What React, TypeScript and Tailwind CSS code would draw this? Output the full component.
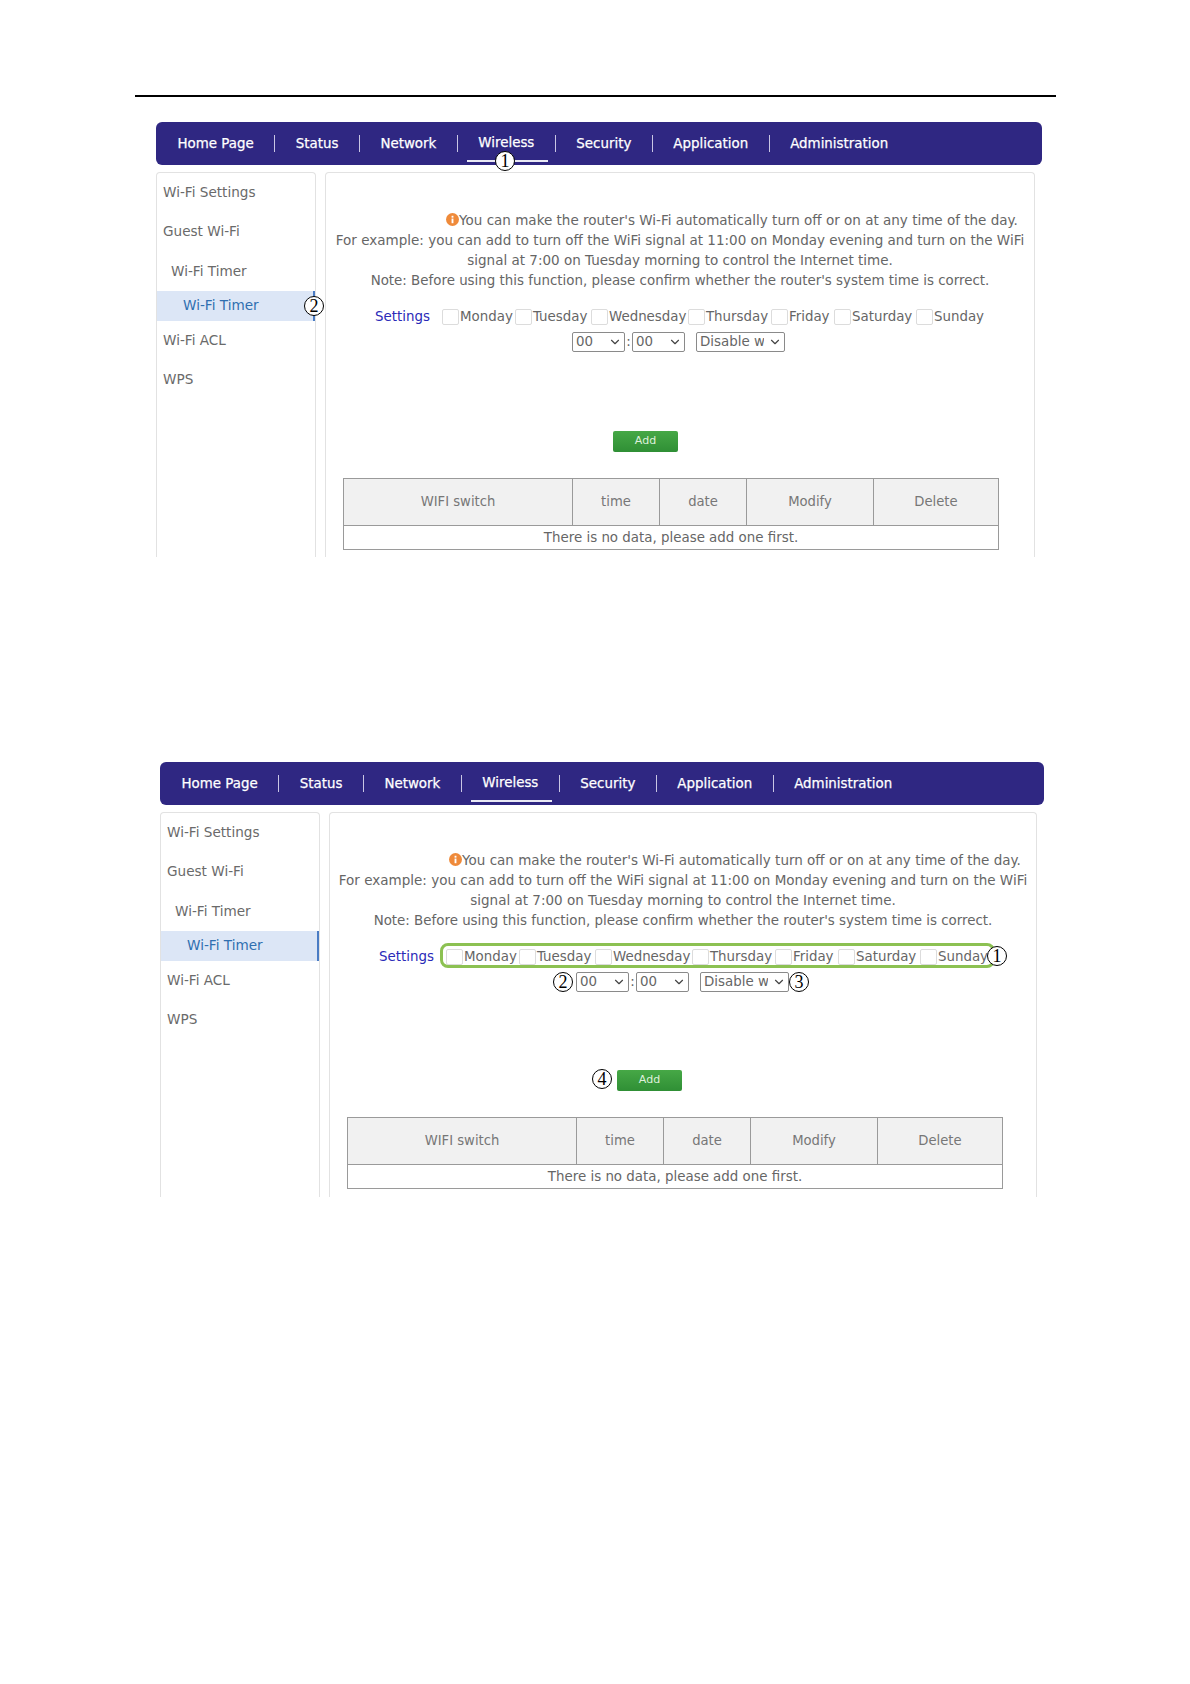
import { ReactNode } from "react";
import { ChevronDown } from "lucide-react";

const navItems = ["Home Page", "Status", "Network", "Wireless", "Security", "Application", "Administration"];
const days = ["Monday", "Tuesday", "Wednesday", "Thursday", "Friday", "Saturday", "Sunday"];
const hours = ["00", "01", "02", "03"];

function Badge({ n, className }: { n: number; className: string }) {
  return (
    <span
      className={`absolute flex h-[20px] w-[20px] -translate-x-1/2 -translate-y-1/2 items-center justify-center rounded-full border border-black bg-white font-['Liberation_Serif',serif] text-[18px] leading-none text-black ${className}`}
    >
      {n}
    </span>
  );
}

function NavBar() {
  return (
    <div className="flex h-[43px] items-center rounded-md bg-[#2f2782] pl-[1px] text-white">
      {navItems.map((item, i) => (
        <div key={item} className="flex items-center">
          {i > 0 && <div className="h-[17px] w-px bg-[#c9c6e4]" />}
          <div className="relative px-[20.5px] text-[13.4px] leading-[43px] [-webkit-text-stroke:0.25px_white]">
            <span className={item === "Wireless" ? "relative -top-px" : ""}>{item}</span>
            {item === "Wireless" && <div className="absolute bottom-[3px] left-[9px] right-[7px] h-[2px] bg-[#e8e8f4]" />}
          </div>
        </div>
      ))}
    </div>
  );
}

function SideBar() {
  return (
    <div className="h-[385px] w-[160px] shrink-0 rounded-t border border-b-0 border-[#e2e2e2] text-[13.6px] text-[#6a6a6a]">
      <div className="flex h-[39px] items-center pl-[6px]">Wi-Fi Settings</div>
      <div className="flex h-[39px] items-center pl-[6px]">Guest Wi-Fi</div>
      <div className="flex h-[39.5px] items-center pl-[14px]">Wi-Fi Timer</div>
      <div className="flex h-[30px] items-center border-r-2 border-[#4a7cc4] bg-[#dce6f6] pl-[26px] text-[#2f6fb0]">Wi-Fi Timer</div>
      <div className="flex h-[39.5px] items-center pl-[6px]">Wi-Fi ACL</div>
      <div className="flex h-[39px] items-center pl-[6px]">WPS</div>
    </div>
  );
}

function Select({ className, children }: { className: string; children: ReactNode }) {
  return (
    <div className={`relative h-[20px] ${className}`}>
      <select className="h-full w-full appearance-none rounded-[2px] border border-[#8a8a8a] bg-white pl-[3px] pr-[20px] text-[13.4px] leading-none text-[#666]">
        {children}
      </select>
      <ChevronDown size={14} strokeWidth={2} className="pointer-events-none absolute right-[3px] top-[3px] text-[#444]" />
    </div>
  );
}

function Content({ addGap }: { addGap: string }) {
  return (
    <div className="mr-[7px] h-[385px] flex-1 rounded-t border border-b-0 border-[#e2e2e2] text-[13.4px] text-[#666]">
      <div className="pt-[36.5px] text-center text-[13.5px] leading-[20.4px]">
        <p className="pl-[104px]">
          <svg viewBox="0 0 14 14" className="inline-block h-[13px] w-[13px] align-[-1px]">
            <circle cx="7" cy="7" r="7" fill="#ef8a3a" />
            <rect x="6" y="6" width="2" height="5" fill="#fff" />
            <rect x="6" y="3" width="2" height="2" fill="#fff" />
          </svg>
          You can make the router's Wi-Fi automatically turn off or on at any time of the day.
        </p>
        <p>For example: you can add to turn off the WiFi signal at 11:00 on Monday evening and turn on the WiFi</p>
        <p>signal at 7:00 on Tuesday morning to control the Internet time.</p>
        <p className="text-[13.4px]">Note: Before using this function, please confirm whether the router's system time is correct.</p>
      </div>
      <div className="mt-[16px] flex h-[20px] items-center pl-[49px]">
        <span className="mr-[12px] text-[#2a2ab8]">Settings</span>
        <div className="grid grid-cols-[73px_76px_97px_83px_63px_82px_auto]">
          {days.map((day) => (
            <label key={day} className="flex items-center whitespace-nowrap">
              <span className="mr-px h-[16px] w-[17px] shrink-0 rounded-[2px] border border-[#dcdcdc] bg-white" />
              {day}
            </label>
          ))}
        </div>
      </div>
      <div className="mt-[5px] flex h-[20px] items-center pl-[246px]">
        <Select className="w-[53px]">{hours.map((h) => <option key={h}>{h}</option>)}</Select>
        <span className="w-[7px] text-center">:</span>
        <Select className="w-[53px]">{hours.map((h) => <option key={h}>{h}</option>)}</Select>
        <Select className="ml-[11px] w-[89px]">
          <option>Disable wifi</option>
          <option>Enable wifi</option>
        </Select>
      </div>
      <div className={`${addGap} pl-[287px]`}>
        <button className="h-[21px] w-[65px] rounded-[2px] bg-gradient-to-b from-[#46a846] to-[#2f8f35] text-[11px] text-[#dff0dc]">Add</button>
      </div>
      <div className="ml-[17px] mt-[26.5px] w-[656px] border border-[#9a9a9a] text-[13.2px]">
        <div className="grid h-[47px] grid-cols-[228px_87px_87px_127px_1fr] border-b border-[#9a9a9a] bg-[#f1f1f1] text-[#777]">
          <div className="flex items-center justify-center">WIFI switch</div>
          <div className="flex items-center justify-center border-l border-[#9a9a9a]">time</div>
          <div className="flex items-center justify-center border-l border-[#9a9a9a]">date</div>
          <div className="flex items-center justify-center border-l border-[#9a9a9a]">Modify</div>
          <div className="flex items-center justify-center border-l border-[#9a9a9a]">Delete</div>
        </div>
        <div className="flex h-[23px] items-center justify-center text-[13.4px]">There is no data, please add one first.</div>
      </div>
    </div>
  );
}

function Screen({ className, addGap, children }: { className: string; addGap: string; children: ReactNode }) {
  return (
    <div className={`relative h-[435px] ${className}`}>
      <NavBar />
      <div className="mt-[7px] flex gap-[9px]">
        <SideBar />
        <Content addGap={addGap} />
      </div>
      {children}
    </div>
  );
}

export default function App() {
  return (
    <div className="h-[1684px] w-[1190px] overflow-hidden bg-white pt-[95px] font-['DejaVu_Sans',sans-serif]">
      <div className="ml-[135px] h-[2px] w-[921px] bg-black" />
      <Screen className="ml-[156px] mt-[25px] w-[886px]" addGap="mt-[78px]">
        <Badge n={1} className="left-[349px] top-[39px]" />
        <Badge n={2} className="left-[158px] top-[184px]" />
      </Screen>
      <Screen className="ml-[160px] mt-[205px] w-[884px]" addGap="mt-[77px]">
        <div className="absolute left-[280px] top-[181px] h-[25px] w-[555px] rounded-lg border-[3px] border-[#8cc152]" />
        <Badge n={1} className="left-[837px] top-[194px]" />
        <Badge n={2} className="left-[403px] top-[220px]" />
        <Badge n={3} className="left-[639px] top-[220px]" />
        <Badge n={4} className="left-[442px] top-[317px]" />
      </Screen>
    </div>
  );
}
